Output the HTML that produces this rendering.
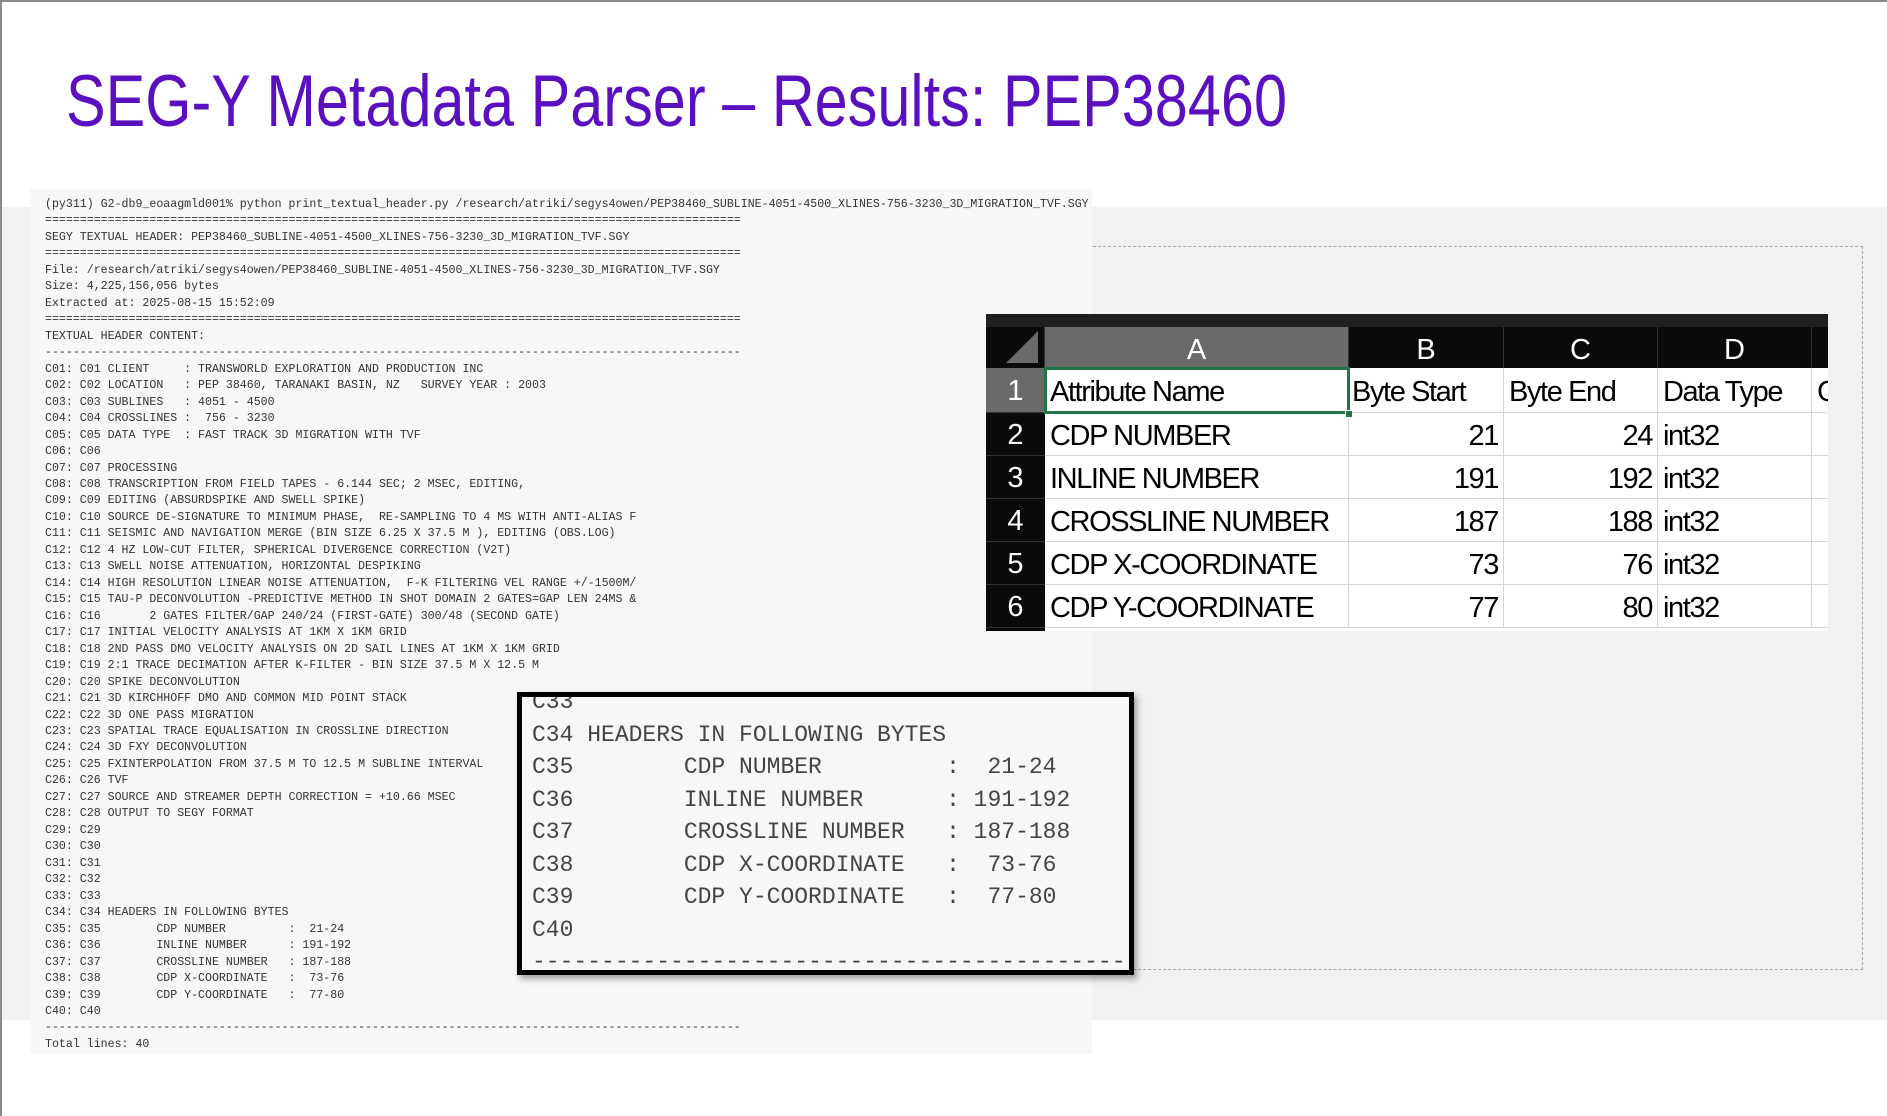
<!DOCTYPE html>
<html><head><meta charset="utf-8"><style>
*{margin:0;padding:0;box-sizing:border-box}
body{width:1887px;height:1116px;position:relative;background:#fff;overflow:hidden;font-family:"Liberation Sans",sans-serif}
.frame{position:absolute;left:0;top:0;width:1887px;height:1116px;border-top:2px solid #8a8a8a;border-left:2px solid #8a8a8a}
.band{position:absolute;left:0;top:207px;width:1887px;height:813px;background:#f0f1f3}
.title{position:absolute;left:66px;top:60px;font-size:73px;color:#5b10c0;white-space:nowrap;transform:scaleX(0.814);transform-origin:left top;line-height:84px}
.term{position:absolute;left:30px;top:189px;width:1062px;height:865px;background:#f7f7f7}
.term pre{position:absolute;left:15px;top:8px;font-family:"Liberation Mono",monospace;font-size:11.6px;line-height:16.47px;color:#333}
.dash{position:absolute;left:1093px;top:246px;width:770px;height:724px;border:1.5px dashed #a8a8a8;border-left:none}
.xl{position:absolute;left:986px;top:314px;width:842px;height:317px;background:#fff;overflow:hidden}
.xl .strip{position:absolute;left:0;top:0;width:842px;height:13px;background:#1f1f1f}
.xl .colh{position:absolute;top:13px;height:41px;background:#0a0a0a;color:#fff;font-size:29px;text-align:center;line-height:46px;border-right:1px solid #333}
.xl .rowh{position:absolute;left:0;width:59px;background:#0a0a0a;color:#fff;font-size:29px;text-align:center;border-bottom:1px solid #333}
.xl .c{position:absolute;font-size:29px;letter-spacing:-1.4px;color:#000;border-right:1px solid #d4d4d4;border-bottom:1px solid #d4d4d4;white-space:nowrap;overflow:hidden;padding:2px 5px 0}
.inset{position:absolute;left:517px;top:692px;width:617px;height:283px;background:#f7f7f7;border:5px solid #000;box-shadow:3px 4px 6px rgba(0,0,0,.35);overflow:hidden}
.inset pre{position:absolute;left:10px;top:-11px;font-family:"Liberation Mono",monospace;font-size:23px;line-height:32.5px;color:#444}
</style></head><body>
<div class="band"></div>
<div class="frame"></div>
<div class="title">SEG-Y Metadata Parser – Results: PEP38460</div>
<div class="term"><pre>(py311) G2-db9_eoaagmld001% python print_textual_header.py /research/atriki/segys4owen/PEP38460_SUBLINE-4051-4500_XLINES-756-3230_3D_MIGRATION_TVF.SGY
====================================================================================================
SEGY TEXTUAL HEADER: PEP38460_SUBLINE-4051-4500_XLINES-756-3230_3D_MIGRATION_TVF.SGY
====================================================================================================
File: /research/atriki/segys4owen/PEP38460_SUBLINE-4051-4500_XLINES-756-3230_3D_MIGRATION_TVF.SGY
Size: 4,225,156,056 bytes
Extracted at: 2025-08-15 15:52:09
====================================================================================================
TEXTUAL HEADER CONTENT:
----------------------------------------------------------------------------------------------------
C01: C01 CLIENT     : TRANSWORLD EXPLORATION AND PRODUCTION INC
C02: C02 LOCATION   : PEP 38460, TARANAKI BASIN, NZ   SURVEY YEAR : 2003
C03: C03 SUBLINES   : 4051 - 4500
C04: C04 CROSSLINES :  756 - 3230
C05: C05 DATA TYPE  : FAST TRACK 3D MIGRATION WITH TVF
C06: C06
C07: C07 PROCESSING
C08: C08 TRANSCRIPTION FROM FIELD TAPES - 6.144 SEC; 2 MSEC, EDITING,
C09: C09 EDITING (ABSURDSPIKE AND SWELL SPIKE)
C10: C10 SOURCE DE-SIGNATURE TO MINIMUM PHASE,  RE-SAMPLING TO 4 MS WITH ANTI-ALIAS F
C11: C11 SEISMIC AND NAVIGATION MERGE (BIN SIZE 6.25 X 37.5 M ), EDITING (OBS.LOG)
C12: C12 4 HZ LOW-CUT FILTER, SPHERICAL DIVERGENCE CORRECTION (V2T)
C13: C13 SWELL NOISE ATTENUATION, HORIZONTAL DESPIKING
C14: C14 HIGH RESOLUTION LINEAR NOISE ATTENUATION,  F-K FILTERING VEL RANGE +/-1500M/
C15: C15 TAU-P DECONVOLUTION -PREDICTIVE METHOD IN SHOT DOMAIN 2 GATES=GAP LEN 24MS &amp;
C16: C16       2 GATES FILTER/GAP 240/24 (FIRST-GATE) 300/48 (SECOND GATE)
C17: C17 INITIAL VELOCITY ANALYSIS AT 1KM X 1KM GRID
C18: C18 2ND PASS DMO VELOCITY ANALYSIS ON 2D SAIL LINES AT 1KM X 1KM GRID
C19: C19 2:1 TRACE DECIMATION AFTER K-FILTER - BIN SIZE 37.5 M X 12.5 M
C20: C20 SPIKE DECONVOLUTION
C21: C21 3D KIRCHHOFF DMO AND COMMON MID POINT STACK
C22: C22 3D ONE PASS MIGRATION
C23: C23 SPATIAL TRACE EQUALISATION IN CROSSLINE DIRECTION
C24: C24 3D FXY DECONVOLUTION
C25: C25 FXINTERPOLATION FROM 37.5 M TO 12.5 M SUBLINE INTERVAL
C26: C26 TVF
C27: C27 SOURCE AND STREAMER DEPTH CORRECTION = +10.66 MSEC
C28: C28 OUTPUT TO SEGY FORMAT
C29: C29
C30: C30
C31: C31
C32: C32
C33: C33
C34: C34 HEADERS IN FOLLOWING BYTES
C35: C35        CDP NUMBER         :  21-24
C36: C36        INLINE NUMBER      : 191-192
C37: C37        CROSSLINE NUMBER   : 187-188
C38: C38        CDP X-COORDINATE   :  73-76
C39: C39        CDP Y-COORDINATE   :  77-80
C40: C40
----------------------------------------------------------------------------------------------------
Total lines: 40</pre></div>
<div class="dash"></div>
<div class="xl">
<div class="strip"></div>
<div class="colh" style="left:0;width:59px;background:#0a0a0a"><svg width="59" height="41" style="position:absolute;left:0;top:0"><polygon points="52,4 52,36 20,36" fill="#6a6a6a"/></svg></div>
<div class="colh" style="left:59px;width:304px;background:#6a6a6a">A</div>
<div class="colh" style="left:363px;width:155px">B</div>
<div class="colh" style="left:518px;width:154px">C</div>
<div class="colh" style="left:672px;width:154px">D</div>
<div class="colh" style="left:826px;width:30px"></div>
<div class="rowh" style="top:54px;height:45px;line-height:47px;background:#6a6a6a">1</div>
<div class="rowh" style="top:99px;height:43px;line-height:45px">2</div>
<div class="rowh" style="top:142px;height:43px;line-height:45px">3</div>
<div class="rowh" style="top:185px;height:43px;line-height:45px">4</div>
<div class="rowh" style="top:228px;height:43px;line-height:45px">5</div>
<div class="rowh" style="top:271px;height:43px;line-height:45px">6</div>
<div class="rowh" style="top:314px;height:10px"></div>

<div class="c" style="left:59px;top:54px;width:304px;height:45px;line-height:45px">Attribute Name</div>
<div class="c" style="left:363px;top:54px;width:155px;height:45px;line-height:45px;padding:2px 3px 0">Byte Start</div>
<div class="c" style="left:518px;top:54px;width:154px;height:45px;line-height:45px">Byte End</div>
<div class="c" style="left:672px;top:54px;width:154px;height:45px;line-height:45px">Data Type</div>
<div class="c" style="left:826px;top:54px;width:30px;height:45px;line-height:45px">C</div>

<div class="c" style="left:59px;top:99px;width:304px;height:43px;line-height:43px">CDP NUMBER</div>
<div class="c" style="left:363px;top:99px;width:155px;height:43px;line-height:43px;text-align:right">21</div>
<div class="c" style="left:518px;top:99px;width:154px;height:43px;line-height:43px;text-align:right">24</div>
<div class="c" style="left:672px;top:99px;width:154px;height:43px;line-height:43px">int32</div>

<div class="c" style="left:59px;top:142px;width:304px;height:43px;line-height:43px">INLINE NUMBER</div>
<div class="c" style="left:363px;top:142px;width:155px;height:43px;line-height:43px;text-align:right">191</div>
<div class="c" style="left:518px;top:142px;width:154px;height:43px;line-height:43px;text-align:right">192</div>
<div class="c" style="left:672px;top:142px;width:154px;height:43px;line-height:43px">int32</div>

<div class="c" style="left:59px;top:185px;width:304px;height:43px;line-height:43px">CROSSLINE NUMBER</div>
<div class="c" style="left:363px;top:185px;width:155px;height:43px;line-height:43px;text-align:right">187</div>
<div class="c" style="left:518px;top:185px;width:154px;height:43px;line-height:43px;text-align:right">188</div>
<div class="c" style="left:672px;top:185px;width:154px;height:43px;line-height:43px">int32</div>

<div class="c" style="left:59px;top:228px;width:304px;height:43px;line-height:43px">CDP X-COORDINATE</div>
<div class="c" style="left:363px;top:228px;width:155px;height:43px;line-height:43px;text-align:right">73</div>
<div class="c" style="left:518px;top:228px;width:154px;height:43px;line-height:43px;text-align:right">76</div>
<div class="c" style="left:672px;top:228px;width:154px;height:43px;line-height:43px">int32</div>

<div class="c" style="left:59px;top:271px;width:304px;height:43px;line-height:43px">CDP Y-COORDINATE</div>
<div class="c" style="left:363px;top:271px;width:155px;height:43px;line-height:43px;text-align:right">77</div>
<div class="c" style="left:518px;top:271px;width:154px;height:43px;line-height:43px;text-align:right">80</div>
<div class="c" style="left:672px;top:271px;width:154px;height:43px;line-height:43px">int32</div>
<div class="c" style="left:826px;top:99px;width:30px;height:43px"></div>
<div class="c" style="left:826px;top:142px;width:30px;height:43px"></div>
<div class="c" style="left:826px;top:185px;width:30px;height:43px"></div>
<div class="c" style="left:826px;top:228px;width:30px;height:43px"></div>
<div class="c" style="left:826px;top:271px;width:30px;height:43px"></div>

<div style="position:absolute;left:58px;top:53px;width:306px;height:47px;border:3px solid #217346"></div>
<div style="position:absolute;left:359px;top:96px;width:8px;height:8px;background:#217346;border:1px solid #fff"></div>
</div>
<div class="inset"><pre>C33
C34 HEADERS IN FOLLOWING BYTES
C35        CDP NUMBER         :  21-24
C36        INLINE NUMBER      : 191-192
C37        CROSSLINE NUMBER   : 187-188
C38        CDP X-COORDINATE   :  73-76
C39        CDP Y-COORDINATE   :  77-80
C40
--------------------------------------------</pre></div>
</body></html>
